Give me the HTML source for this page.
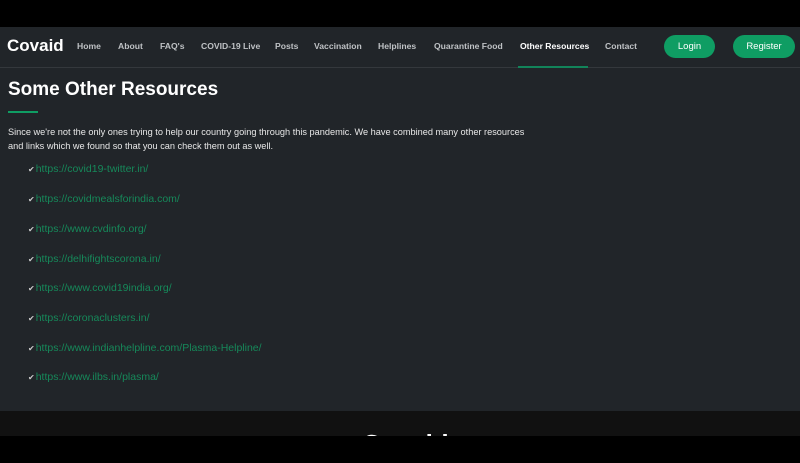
<!DOCTYPE html>
<html><head><meta charset="utf-8">
<style>
*{margin:0;padding:0;box-sizing:border-box}
body{width:800px;height:463px;overflow:hidden;background:#000;font-family:"Liberation Sans",sans-serif;position:relative}
.nav{position:absolute;top:27px;left:0;width:800px;height:41px;background:#212529;border-bottom:1px solid #34383c}
.logo{position:absolute;left:7px;top:9px;color:#fff;font-weight:bold;font-size:17px}
.nav a{position:absolute;top:14px;color:#bfc2c5;font-size:8.6px;font-weight:bold;text-decoration:none;white-space:nowrap}
.nav a.act{color:#fff}
.ul{position:absolute;left:518px;top:39px;width:70px;height:2px;background:#12845a}
.btn{position:absolute;top:8px;height:23px;border-radius:12px;background:#0f9d63;color:#fff;font-size:9.5px;text-align:center;line-height:23px}
.main{position:absolute;top:68px;left:0;width:800px;height:343px;background:#212529}
h1{position:absolute;left:8px;top:11px;color:#fff;font-size:19px;font-weight:bold}
.rule{position:absolute;left:8px;top:43px;width:30px;height:2px;background:#0f9d63}
.p{position:absolute;left:8px;top:57px;color:#e8e8e8;font-size:9.2px;line-height:14px;width:600px;white-space:nowrap}
.link{position:absolute;left:28px;color:#16895a;font-size:10.5px}
.link span{color:#ccc;font-size:8px;margin-right:1px}
.foot{position:absolute;top:411px;left:0;width:800px;height:25px;background:#111;overflow:hidden}
.foot div{position:absolute;left:362px;top:18px;color:#fff;font-size:26px;font-weight:bold}
</style></head><body>
<div class="nav">
<div class="logo">Covaid</div>
<a style="left:77px">Home</a>
<a style="left:118px">About</a>
<a style="left:160px">FAQ's</a>
<a style="left:201px">COVID-19 Live</a>
<a style="left:275px">Posts</a>
<a style="left:314px">Vaccination</a>
<a style="left:378px">Helplines</a>
<a style="left:434px">Quarantine Food</a>
<a class="act" style="left:520px">Other Resources</a>
<a style="left:605px">Contact</a>
<div class="ul"></div>
<div class="btn" style="left:664px;width:51px">Login</div>
<div class="btn" style="left:733px;width:62px">Register</div>
</div>
<div class="main">
<h1>Some Other Resources</h1>
<div class="rule"></div>
<div class="p">Since we're not the only ones trying to help our country going through this pandemic. We have combined many other resources<br>and links which we found so that you can check them out as well.</div>
<div class="link" style="top:95px"><span>✔</span>https://covid19-twitter.in/</div>
<div class="link" style="top:125px"><span>✔</span>https://covidmealsforindia.com/</div>
<div class="link" style="top:155px"><span>✔</span>https://www.cvdinfo.org/</div>
<div class="link" style="top:185px"><span>✔</span>https://delhifightscorona.in/</div>
<div class="link" style="top:214px"><span>✔</span>https://www.covid19india.org/</div>
<div class="link" style="top:244px"><span>✔</span>https://coronaclusters.in/</div>
<div class="link" style="top:274px"><span>✔</span>https://www.indianhelpline.com/Plasma-Helpline/</div>
<div class="link" style="top:303px"><span>✔</span>https://www.ilbs.in/plasma/</div>
</div>
<div class="foot"><div>Covaid</div></div>
</body></html>
